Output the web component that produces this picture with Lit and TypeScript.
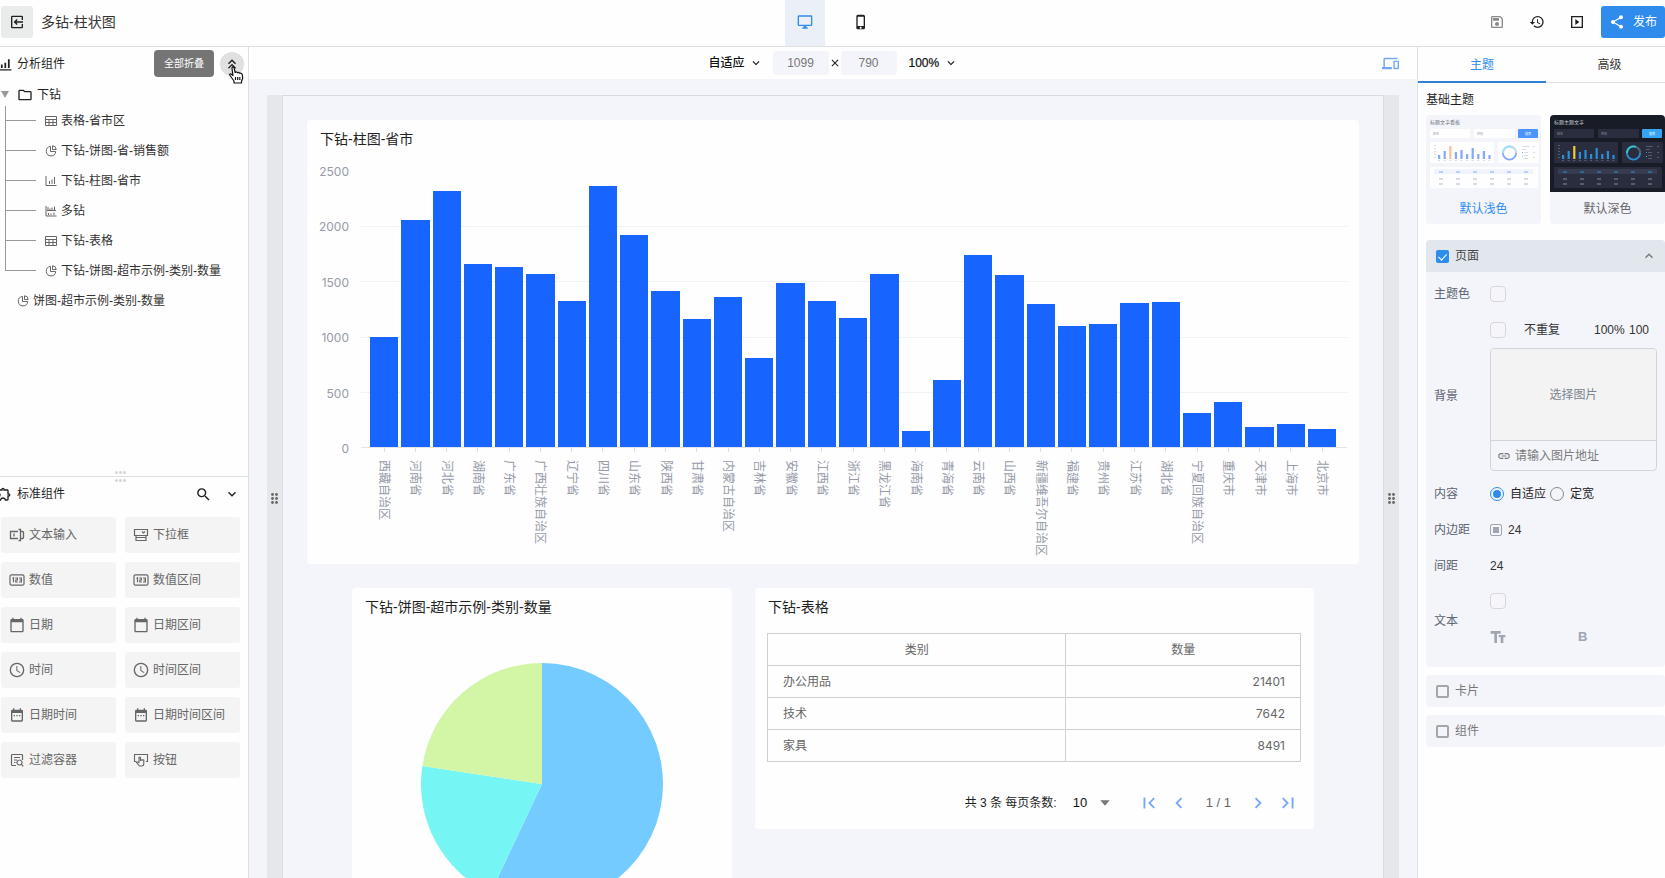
import { LitElement, html, css, svg } from "lit";
import { customElement } from "lit/decorators.js";
import { classMap } from "lit/directives/class-map.js";
import { styleMap } from "lit/directives/style-map.js";

const base = css`
  *, *::before, *::after { box-sizing: border-box; }
  :host {
    font-family: "Liberation Sans", "Noto Sans CJK SC", sans-serif;
    font-size: 12px;
    line-height: 18px;
    color: #1f1f1f;
  }
  button, input, select {
    font: inherit;
    color: inherit;
    margin: 0;
    padding: 0;
    border: 0;
    background: none;
    min-width: 0;
  }
  button { cursor: pointer; display: flex; align-items: center; }
  select { appearance: none; outline: none; }
  svg { display: block; flex: none; }
  h1, h2, h3, ul, p { margin: 0; padding: 0; font-weight: 400; list-style: none; }
`;

const P = {
  exit: "M5 2.500h14a2 2 0 0 1 2 2V9h-2V4.500H5v15h14V15h2v4.500a2 2 0 0 1-2 2H5a2 2 0 0 1-2-2v-15a2 2 0 0 1 2-2zM11.500 7.500L13 9l-2 2h10v2H11l2 2-1.500 1.500L7 12z",
  desktop: "M21 2H3c-1.1 0-2 .9-2 2v12c0 1.1.9 2 2 2h7v2H8v2h8v-2h-2v-2h7c1.1 0 2-.9 2-2V4c0-1.1-.9-2-2-2zm0 14H3V4h18v12z",
  phone: "M15.5 1h-8C6.12 1 5 2.12 5 3.5v17C5 21.88 6.12 23 7.5 23h8c1.38 0 2.5-1.12 2.5-2.5v-17C18 2.12 16.88 1 15.5 1zm-4 21c-.83 0-1.5-.67-1.5-1.5s.67-1.5 1.5-1.5 1.5.67 1.5 1.5-.67 1.5-1.5 1.5zm4.5-4H7V4h9v14z",
  save: "M17 3H5c-1.11 0-2 .9-2 2v14c0 1.1.89 2 2 2h14c1.1 0 2-.9 2-2V7l-4-4zm2 16H5V5h11.17L19 7.83V19zm-7-7c-1.66 0-3 1.34-3 3s1.34 3 3 3 3-1.34 3-3-1.34-3-3-3zM6 6h9v4H6z",
  history: "M13 3a9 9 0 0 0-9 9H1l3.89 3.89.07.14L9 12H6c0-3.87 3.13-7 7-7s7 3.13 7 7-3.13 7-7 7c-1.93 0-3.68-.79-4.94-2.06l-1.42 1.42A8.95 8.95 0 0 0 13 21a9 9 0 0 0 0-18zm-1 5v5l4.28 2.54.72-1.21-3.5-2.08V8H12z",
  play: "M3 3h18v18H3zM5 5v14h14V5zM9.500 7.500l6 4.500-6 4.500z",
  share: "M18 16.08c-.76 0-1.44.3-1.96.77L8.91 12.7c.05-.23.09-.46.09-.7s-.04-.47-.09-.7l7.05-4.11c.54.5 1.25.81 2.04.81 1.66 0 3-1.34 3-3s-1.34-3-3-3-3 1.34-3 3c0 .24.04.47.09.7L8.04 9.81C7.5 9.31 6.79 9 6 9c-1.66 0-3 1.34-3 3s1.34 3 3 3c.79 0 1.5-.31 2.04-.81l7.12 4.16c-.05.21-.08.43-.08.65 0 1.61 1.31 2.92 2.92 2.92s2.92-1.31 2.92-2.92-1.31-2.92-2.92-2.92z",
  devices: "M4 6h18V4H4c-1.1 0-2 .9-2 2v11H0v3h14v-3H4V6zm19 2h-6c-.55 0-1 .45-1 1v10c0 .55.45 1 1 1h6c.55 0 1-.45 1-1V9c0-.55-.45-1-1-1zm-1 10h-4v-8h4v8z",
  folder: "M9.17 6l2 2H20v10H4V6h5.17M10 4H4c-1.1 0-1.99.9-1.99 2L2 18c0 1.1.9 2 2 2h16c1.1 0 2-.9 2-2V8c0-1.1-.9-2-2-2h-8l-2-2z",
  link: "M3.9 12c0-1.71 1.39-3.1 3.1-3.1h4V7H7c-2.76 0-5 2.24-5 5s2.24 5 5 5h4v-1.9H7c-1.71 0-3.1-1.39-3.1-3.1zM8 13h8v-2H8v2zm9-6h-4v1.9h4c1.71 0 3.1 1.39 3.1 3.1s-1.39 3.1-3.1 3.1h-4V17h4c2.76 0 5-2.24 5-5s-2.24-5-5-5z",
  date: "M20 3h-1V1h-2v2H7V1H5v2H4c-1.1 0-2 .9-2 2v16c0 1.1.9 2 2 2h16c1.1 0 2-.9 2-2V5c0-1.1-.9-2-2-2zm0 18H4V8h16v13z",
  datetime: "M19 4h-1V2h-2v2H8V2H6v2H5a2 2 0 0 0-2 2v14a2 2 0 0 0 2 2h14a2 2 0 0 0 2-2V6a2 2 0 0 0-2-2zm0 16H5V9h14v11zM7 12h2v2H7zm4 0h2v2h-2zm4 0h2v2h-2z",
  clock: "M12 1a11 11 0 1 0 0 22 11 11 0 0 0 0-22zm0 20a9 9 0 1 1 0-18 9 9 0 0 1 0 18zM12.500 6H11v7l5.200 3.600.9-1.300-4.600-3.100z",
  extension: "M10.500 4.500c.28 0 .5.22.5.5v2h6v6h2c.28 0 .5.22.5.5s-.22.5-.5.5h-2v6h-2.120c-.68-1.750-2.390-3-4.380-3s-3.700 1.250-4.380 3H4v-2.120c1.750-.68 3-2.390 3-4.380 0-1.990-1.240-3.700-2.990-4.380L4 7h6V5c0-.28.22-.5.5-.5m0-2C9.120 2.500 8 3.620 8 5H4c-1.100 0-1.990.9-1.990 2v3.800h.29c1.490 0 2.700 1.210 2.700 2.700s-1.210 2.700-2.700 2.700H2V20c0 1.100.9 2 2 2h3.800v-.3c0-1.490 1.210-2.700 2.700-2.700s2.700 1.210 2.700 2.700v.3H17c1.100 0 2-.9 2-2v-4c1.380 0 2.500-1.120 2.500-2.500S20.380 11 19 11V7c0-1.100-.9-2-2-2h-4c0-1.380-1.120-2.500-2.500-2.500z",
  search: "M15.500 14h-.79l-.28-.27A6.470 6.470 0 0 0 16 9.500 6.500 6.500 0 1 0 9.500 16c1.610 0 3.090-.59 4.230-1.570l.27.28v.79l5 4.990L20.490 19l-4.990-5zm-6 0C7.010 14 5 11.990 5 9.500S7.010 5 9.500 5 14 7.010 14 9.500 11.990 14 9.500 14z",
  down: "M7.410 8.590L12 13.170l4.590-4.580L18 10l-6 6-6-6z",
  up: "M7.410 15.410L12 10.830l4.590 4.580L18 14l-6-6-6 6z",
  left: "M15.410 7.410L14 6l-6 6 6 6 1.410-1.410L10.830 12z",
  right: "M10 6L8.590 7.410 13.170 12l-4.580 4.590L10 18l6-6z",
  first: "M18.410 16.590L13.820 12l4.590-4.590L17 6l-6 6 6 6zM6 6h2v12H6z",
  last: "M5.590 7.410L10.180 12l-4.590 4.590L7 18l6-6-6-6zM16 6h2v12h-2z",
  collapse: "M6 17.590L7.410 19 12 14.420 16.590 19 18 17.590l-6-6zM6 11l1.410 1.410L12 7.830l4.590 4.580L18 11l-6-6z",
  drop: "M5 8h14l-7 8z",
  close: "M19 6.410L17.590 5 12 10.590 6.410 5 5 6.410 10.590 12 5 17.590 6.410 19 12 13.410 17.590 19 19 17.590 13.410 12z",
  bars: "M1 21h22v2H1zM5 13h3v6H5zm6-3h3v9h-3zm6-6h3v15h-3z",
  size: "M1 3h15v4h-5.500v14h-4V7H1zm12 6h10v3.500h-3V21h-4v-8.500h-3z",
};

const icon = (d: string, size = 16) =>
  html`<svg width=${size} height=${size} viewBox="0 0 24 24" fill="currentColor" aria-hidden="true"><path fill-rule="evenodd" d=${d}></path></svg>`;

const lineIcon = (d: string, size = 12, box = 12, weight = 1) =>
  html`<svg width=${size} height=${size} viewBox="0 0 ${box} ${box}" fill="none" stroke="currentColor" stroke-width=${weight} aria-hidden="true"><path d=${d}></path></svg>`;

const L = {
  table: "M.5 1.5h11v9H.5zM.5 4.500h11M.5 7.500h11M4 4.500v6M8 4.500v6",
  pie: "M5.500 1.500a4.700 4.700 0 1 0 5.200 5M5.500 1.500V6.500h5.200M7.500.8a3.800 3.800 0 0 1 3.700 3.700H7.500z",
  bar: "M1 1v9.500h10.500M4.500 9V6M7 9V4.500M9.500 9V2",
  multi: "M1 1v10h10.500M3 5V2M5 5V3.500M7 5V2.500M9.500 5V1.500M2 5.500h9M3.500 10V8M6 10V8.500M9 10V7.500",
};

const C: Record<string, unknown> = {
  input: lineIcon("M9 4.500H1.500v7H9M5 6.500v3M9.500 2.500h2v11h-2M12 4.500h1.500q1 0 1 1v5q0 1-1 1H12", 16, 16, 1.3),
  select: lineIcon("M1.500 2.500h13v6h-13zM3 8.500V13.500h10V8.500M3 10.500h10M9 4.500l1.500 1.500 1.500-1.500", 16, 16, 1.2),
  number: html`<svg width="16" height="16" viewBox="0 0 16 16" fill="none" stroke="currentColor" stroke-width="1.200" aria-hidden="true"><rect x="1" y="2.800" width="14" height="10.400" rx="1.500"></rect><path d="M3.500 6.500l1-.7v4.500M6.200 6h2.200v2H6.800v2h2M10 6h2.400v4H10M10.500 8h1.700"></path></svg>`,
  filter: lineIcon("M13.500 8V3.500q0-1-1-1h-9q-1 0-1 1v9q0 1 1 1H7M5 5.500h6M5 8h3M5 10.500h1.500M10.500 8a2.500 2.500 0 1 0 .01 0M12.300 12.300l2 2", 16, 16, 1.2),
  button: lineIcon("M3.500 9.500H1.500v-7h13v7H13M6 11V5.500q.8-.8 1.500 0V9M7.500 8q.8-.6 1.500 0v1M9 8q1-.6 1.800 0v3.500q0 2.500-2 2.500H6.500L3.500 10.500q1-1.200 2.500.5", 16, 16, 1.1),
};
for (const k of ["date", "datetime", "clock"] as const) C[k] = icon(P[k], 16);

/* ---------- top bar ---------- */
@customElement("top-bar")
class TopBar extends LitElement {
  static styles = [base, css`
    :host { display: grid; grid-template-columns: 1fr auto 1fr; height: 47px; border-bottom: 1px solid #dedfe1; background: #fefefe; }
    .start, .end { display: flex; align-items: center; height: 44px; }
    .start { padding-left: 1px; gap: 8px; }
    .exit { width: 32px; height: 32px; background: #e9eceb; border-radius: 3px; justify-content: center; }
    .title { font-size: 14px; line-height: 20px; color: #333; }
    .modes { display: flex; gap: 16px; }
    .mode { width: 40px; justify-content: center; padding-bottom: 2px; }
    .mode.on { background: #ebf0f8; color: #2f8cec; }
    .end { justify-content: flex-end; gap: 8px; }
    .tool { width: 32px; height: 32px; justify-content: center; }
    .tool.off { color: #8a8a8a; }
    .publish { width: 64px; height: 32px; background: #2f8cec; color: #fff; border-radius: 3px; justify-content: center; gap: 8px; }
  `];
  render() {
    return html`
      <div class="start">
        <button class="exit" aria-label="退出">${icon(P.exit, 16)}</button>
        <h1 class="title">多钻-柱状图</h1>
      </div>
      <div class="modes">
        <button class="mode on" aria-label="桌面">${icon(P.desktop)}</button>
        <button class="mode" aria-label="手机">${icon(P.phone)}</button>
      </div>
      <div class="end">
        <button class="tool off" aria-label="保存">${icon(P.save)}</button>
        <button class="tool" aria-label="历史">${icon(P.history)}</button>
        <button class="tool" aria-label="预览">${icon(P.play)}</button>
        <button class="publish">${icon(P.share)}<span>发布</span></button>
      </div>`;
  }
}

/* ---------- left panel ---------- */
const TREE: [keyof typeof L, string][] = [
  ["table", "表格-省市区"],
  ["pie", "下钻-饼图-省-销售额"],
  ["bar", "下钻-柱图-省市"],
  ["multi", "多钻"],
  ["table", "下钻-表格"],
  ["pie", "下钻-饼图-超市示例-类别-数量"],
];
const PARTS: [string, string][] = [
  ["input", "文本输入"], ["select", "下拉框"],
  ["number", "数值"], ["number", "数值区间"],
  ["date", "日期"], ["date", "日期区间"],
  ["clock", "时间"], ["clock", "时间区间"],
  ["datetime", "日期时间"], ["datetime", "日期时间区间"],
  ["filter", "过滤容器"], ["button", "按钮"],
];

@customElement("left-panel")
class LeftPanel extends LitElement {
  static styles = [base, css`
    :host { display: flex; flex-direction: column; width: 249px; border-right: 1px solid #dedfe1; background: #fefefe; min-height: 0; }
    .top { flex: 430 1 0; border-bottom: 1px solid #dedfe1; position: relative; }
    .bottom { flex: 401 1 0; }
    .head { display: flex; align-items: center; height: 33px; padding-top: 1px; }
    .head-icon { width: 12px; margin-right: 5px; display: flex; justify-content: flex-end; overflow: hidden; }
    .head h2 { font-size: 12px; line-height: 18px; flex: 1; }
    .collapse-wrap { position: relative; padding-right: 4px; }
    .collapse { width: 24px; height: 24px; border-radius: 50%; background: #e0e0e0; justify-content: center; }
    .tip { position: absolute; right: 34px; top: -2px; width: 60px; height: 27px; border-radius: 4px; background: #757575; color: #fff; font-size: 10px; line-height: 27px; text-align: center; }
    .hand { position: absolute; left: 9px; top: 14px; }
    .root { display: flex; align-items: center; height: 23px; padding-left: 1px; gap: 8px; color: #333; }
    .root .caret { color: #999; }
    .folder { display: flex; gap: 4px; align-items: center; color: #222; }
    .items { padding: 0 0 0 5px; }
    .node { display: flex; align-items: center; height: 30px; color: #333; }
    .wire {
      width: 31px; height: 30px; margin-right: 9px;
      background: linear-gradient(#999, #999) 0 0 / 1px 100% no-repeat, linear-gradient(#999, #999) 0 14px / 100% 1px no-repeat;
    }
    .node:last-child .wire { background-size: 1px 14px, 100% 1px; }
    .node svg { margin-right: 4px; color: #666; }
    .lone { padding-left: 17px; }
    .tree { padding-top: 3px; }
    .dots { position: absolute; left: 115px; bottom: -6px; display: grid; grid-template-columns: repeat(3, 3px); gap: 5px 1px; }
    .dots i { width: 3px; height: 3px; border-radius: 50%; background: #d6d6d6; }
    .tools { display: flex; gap: 12px; padding-right: 8px; }
    .grid { display: grid; grid-template-columns: 1fr 1fr; gap: 9px; padding: 7px 8px 0 1px; }
    .part { height: 36px; background: #f4f4f4; border-radius: 3px; padding-left: 8px; gap: 4px; color: #666; }
  `];
  render() {
    return html`
      <section class="top">
        <div class="head">
          <span class="head-icon">${icon(P.bars, 14)}</span>
          <h2>分析组件</h2>
          <div class="collapse-wrap">
            <button class="collapse" aria-label="全部折叠">${icon(P.collapse, 16)}</button>
            <div class="tip" role="tooltip">全部折叠</div>
            <svg class="hand" width="15" height="18" viewBox="0 0 15 18" fill="#fff" stroke="#111" stroke-width="1.200" stroke-linejoin="round">
              <path d="M5 17v-2L1 9.500q-.8-2 1-1.500L4 9.500 3 2.500Q3-.2 5 1.500L6.200 6.500q1.500-1.200 2.300.3 1.400-.9 2.200.5 1.700-.6 2.500 1l.5 4-1.200 3v1.700z"></path>
              <path d="M6.500 11v3M8.700 11v3M10.800 11v3" fill="none"></path>
            </svg>
          </div>
        </div>
        <div class="tree">
          <div class="root">
            <svg class="caret" width="8" height="8" viewBox="0 0 8 8" fill="currentColor"><path d="M0 0h8L4 7z"></path></svg>
            <span class="folder">${icon(P.folder, 16)}<span>下钻</span></span>
          </div>
          <ul class="items">
            ${TREE.map(([k, t]) => html`<li class="node"><span class="wire"></span>${lineIcon(L[k])}<span>${t}</span></li>`)}
          </ul>
          <div class="node lone">${lineIcon(L.pie)}<span>饼图-超市示例-类别-数量</span></div>
        </div>
        <span class="dots">${[1, 2, 3, 4, 5, 6].map(() => html`<i></i>`)}</span>
      </section>
      <section class="bottom">
        <div class="head">
          <span class="head-icon">${icon(P.extension, 16)}</span>
          <h2>标准组件</h2>
          <div class="tools">
            <button aria-label="搜索">${icon(P.search, 17)}</button>
            <button aria-label="收起">${icon(P.down, 16)}</button>
          </div>
        </div>
        <div class="grid">
          ${PARTS.map(([k, t]) => html`<button class="part">${C[k]}<span>${t}</span></button>`)}
        </div>
      </section>`;
  }
}

/* ---------- charts ---------- */
const BARS: [string, number][] = [
  ["西藏自治区", 998], ["河南省", 2060], ["河北省", 2320], ["湖南省", 1661], ["广东省", 1634],
  ["广西壮族自治区", 1568], ["辽宁省", 1327], ["四川省", 2365], ["山东省", 1920], ["陕西省", 1414],
  ["甘肃省", 1161], ["内蒙古自治区", 1360], ["吉林省", 808], ["安徽省", 1490], ["江西省", 1322],
  ["浙江省", 1173], ["黑龙江省", 1570], ["海南省", 144], ["青海省", 610], ["云南省", 1742],
  ["山西省", 1556], ["新疆维吾尔自治区", 1298], ["福建省", 1098], ["贵州省", 1114], ["江苏省", 1304],
  ["湖北省", 1313], ["宁夏回族自治区", 307], ["重庆市", 411], ["天津市", 180], ["上海市", 206], ["北京市", 162],
];

@customElement("bar-chart")
class BarChart extends LitElement {
  static styles = [base, css`
    :host { display: grid; grid-template-columns: 42px 1fr; column-gap: 12px; padding-right: 12px; color: #969ba8; }
    .axis { height: 296px; padding-top: 1px; display: flex; flex-direction: column; justify-content: space-between; text-align: right; font-family: "Inter", sans-serif; font-size: 12px; line-height: 18px; }
    .plot {
      height: 277px; margin-top: 9px; display: flex; align-items: flex-end; gap: 3px; padding: 0 11px 0 9px;
      border-bottom: 1px solid #e2e4ea;
      background: linear-gradient(#fefefe 1px, transparent 1px), repeating-linear-gradient(#f1f2f4 0 1px, transparent 1px 20%);
    }
    .bar { flex: 1; background: #1764ff; }
    .names { display: flex; gap: 3px; padding: 0 11px 0 9px; height: 100px; }
    .name { flex: 1; display: flex; flex-direction: column; align-items: center; min-width: 0; }
    .name::before { content: ""; width: 1px; height: 4px; margin-bottom: 8px; background: #dcdfe6; flex: none; }
    .name span { writing-mode: vertical-rl; text-orientation: sideways; white-space: nowrap; line-height: 18px; }
  `];
  render() {
    return html`
      <div class="axis">${[2500, 2000, 1500, 1000, 500, 0].map((v) => html`<span>${v}</span>`)}</div>
      <div>
        <div class="plot">${BARS.map(([, v]) => html`<div class="bar" style=${styleMap({ height: `${v / 25}%` })}></div>`)}</div>
        <div class="names">${BARS.map(([n]) => html`<div class="name"><span>${n}</span></div>`)}</div>
      </div>`;
  }
}

const SLICES: [number, string][] = [[21401, "#73cbff"], [7642, "#75f5f3"], [8491, "#d2f5a6"]];

@customElement("pie-chart")
class PieChart extends LitElement {
  static styles = [base, css`
    :host { display: flex; justify-content: center; }
  `];
  render() {
    const total = SLICES.reduce((a, [v]) => a + v, 0);
    const r = 121;
    let acc = 0;
    const pt = (f: number) => `${r + r * Math.sin(f * 2 * Math.PI)} ${r - r * Math.cos(f * 2 * Math.PI)}`;
    return html`<svg width="242" height="242" viewBox="0 0 242 242" role="img" aria-label="类别数量">
      ${SLICES.map(([v, c]) => {
        const a = acc / total;
        acc += v;
        const b = acc / total;
        return svg`<path fill=${c} d=${`M${r} ${r}L${pt(a)}A${r} ${r} 0 ${b - a > 0.5 ? 1 : 0} 1 ${pt(b)}Z`}></path>`;
      })}
    </svg>`;
  }
}

/* ---------- centre ---------- */
@customElement("work-area")
class WorkArea extends LitElement {
  static styles = [base, css`
    :host { display: flex; flex-direction: column; min-width: 0; min-height: 0; background: #f4f5fa; overflow: hidden; }
    .bar { height: 32px; flex: none; display: grid; grid-template-columns: 1fr auto 1fr; align-items: center; background: #fefefe; }
    .controls { display: flex; align-items: center; grid-column: 2; }
    .pick { display: flex; align-items: center; font-weight: 500; color: #111; gap: 3px; }
    .fit { width: 37px; font-weight: 500; }
    .zoom { width: 32px; font-weight: 500; -webkit-text-stroke: 0.2px; }
    .dim { width: 56px; height: 24px; border-radius: 4px; background: #f4f5fa; text-align: center; color: #777; }
    .first { margin-left: 10px; }
    .second { margin-right: 12px; }
    .devices { justify-self: end; margin-right: 18px; color: #74a6fa; }
    .stage { flex: 1; min-height: 0; padding: 16px 18px 0; display: flex; }
    .grip { width: 16px; background: #e6e7eb; display: flex; align-items: center; justify-content: center; color: #666; padding-top: 24px; }
    .grip.l { border-right: 1px solid #dcdde1; }
    .grip.r { border-left: 1px solid #dcdde1; }
    .page { flex: 1; min-width: 0; border-top: 1px solid #d8dadf; padding: 24px 24px 0; overflow: hidden; }
    .card { background: #fefefe; border-radius: 4px; padding-top: 9px; }
    .card h3 { font-size: 14px; line-height: 20px; color: #222; padding: 0 13px; }
    .wide { height: 444px; margin-bottom: 24px; }
    .wide bar-chart { margin-top: 13px; }
    .row { display: grid; grid-template-columns: 380fr 559fr; gap: 23px; padding: 0 45px; align-items: start; }
    .pie { height: 392px; }
    .pie pie-chart { margin-top: 46px; }
    .tablecard { height: 241px; }
    table { border-collapse: collapse; width: calc(100% - 25px); margin: 16px 13px 0 12px; color: #666; }
    th, td { border: 1px solid #d0d0d0; height: 32px; padding: 0 15px; font-weight: 400; text-align: left; }
    th { text-align: center; }
    th:first-child { width: 56%; }
    td.num { text-align: right; font-family: "Inter", sans-serif; }
    .pager { display: flex; align-items: center; justify-content: flex-end; margin-top: 29px; padding-right: 14px; height: 24px; }
    .per { display: flex; align-items: center; gap: 16px; }
    .per .count { width: 16px; font-size: 13px; }
    .per .pick { gap: 8px; }
    .per svg { color: #777; }
    .nav { color: #74a6fa; width: 24px; height: 24px; justify-content: center; }
    .now { font-size: 13px; color: #666; padding: 0 15px; }
    .n1 { margin-left: 24px; }
    .n2 { margin-left: 6px; }
  `];
  private grip(side: string) {
    return html`<div class="grip ${side}"><svg width="7" height="11" viewBox="0 0 7 11" fill="currentColor">
      ${[1.5, 5.5, 9.5].map((y) => svg`<circle cx="1.500" cy=${y} r="1.400"></circle><circle cx="5.500" cy=${y} r="1.400"></circle>`)}
    </svg></div>`;
  }
  render() {
    return html`
      <div class="bar">
        <div class="controls">
          <label class="pick"><select class="fit" aria-label="适配"><option>自适应</option></select>${icon(P.down, 14)}</label>
          <input class="dim first" aria-label="宽" .value=${"1099"} />
          ${icon(P.close, 12)}
          <input class="dim second" aria-label="高" .value=${"790"} />
          <label class="pick"><select class="zoom" aria-label="缩放"><option>100%</option></select>${icon(P.down, 14)}</label>
        </div>
        <button class="devices" aria-label="设备">${icon(P.devices, 17)}</button>
      </div>
      <div class="stage">
        ${this.grip("l")}
        <main class="page">
          <section class="card wide"><h3>下钻-柱图-省市</h3><bar-chart></bar-chart></section>
          <div class="row">
            <section class="card pie"><h3>下钻-饼图-超市示例-类别-数量</h3><pie-chart></pie-chart></section>
            <section class="card tablecard">
              <h3>下钻-表格</h3>
              <table>
                <thead><tr><th>类别</th><th>数量</th></tr></thead>
                <tbody>
                  ${[["办公用品", 21401], ["技术", 7642], ["家具", 8491]].map(([n, v]) => html`<tr><td>${n}</td><td class="num">${v}</td></tr>`)}
                </tbody>
              </table>
              <div class="pager">
                <label class="per"><span>共 3 条 每页条数:</span>
                  <span class="pick"><select class="count"><option>10</option></select>${icon(P.drop, 16)}</span>
                </label>
                <button class="nav n1" aria-label="第一页">${icon(P.first, 22)}</button>
                <button class="nav n2" aria-label="上一页">${icon(P.left, 22)}</button>
                <span class="now">1 / 1</span>
                <button class="nav" aria-label="下一页">${icon(P.right, 22)}</button>
                <button class="nav n2" aria-label="最后一页">${icon(P.last, 22)}</button>
              </div>
            </section>
          </div>
        </main>
        ${this.grip("r")}
      </div>`;
  }
}

/* ---------- theme preview ---------- */
interface Skin { bg: string; card: string; text: string; head: string; btn: string; bar: string; hot: string; ring: string; ring2: string; cell: string; label: string; }
const LIGHT: Skin = { bg: "#f4f5fa", card: "#fefefe", text: "#6f7480", head: "#f0f4fc", btn: "#4d94ff", bar: "#83aaf5", hot: "#ffbf9b", ring: "#83aaf5", ring2: "#a2e6f2", cell: "#d8dce6", label: "#9a9ea8" };
const DARK: Skin = { bg: "#171c26", card: "#2a2d3e", text: "#c9ccd4", head: "#373c50", btn: "#35a4f5", bar: "#2b8fd8", hot: "#f2cc30", ring: "#2b8fd8", ring2: "#35c6c8", cell: "#575c6c", label: "#8a8fa0" };

const preview = (s: Skin, title: string) => {
  const hs = [4, 8, 13, 7, 9, 5, 11, 5, 8, 4];
  return html`<svg class="thumb" width="100%" height="77" viewBox="0 0 115 77" preserveAspectRatio="none" aria-hidden="true">
    <rect width="115" height="77" fill=${s.bg}></rect>
    <text x="4" y="9" font-size="5" fill=${s.text}>${title}</text>
    <rect x="4" y="14" width="40" height="9" rx="1" fill=${s.card}></rect>
    <rect x="48" y="14" width="41" height="9" rx="1" fill=${s.card}></rect>
    <rect x="92" y="14" width="20" height="9" rx="1" fill=${s.btn}></rect>
    <text x="7" y="20" font-size="3" fill=${s.label}>姓名</text>
    <text x="51" y="20" font-size="3" fill=${s.label}>性别</text>
    <text x="99" y="20" font-size="3" fill="#fff">搜索</text>
    <rect x="4" y="27" width="64" height="21" rx="1" fill=${s.card}></rect>
    <rect x="72" y="27" width="41" height="21" rx="1" fill=${s.card}></rect>
    ${hs.map((h, i) => svg`<rect x=${12 + i * 5.6} y=${44 - h} width="2.200" height=${h} fill=${i === 2 ? s.hot : s.bar}></rect><rect x=${12 + i * 5.6} y="45" width="2" height="1" fill=${s.cell}></rect>`)}
    ${[30, 33, 36, 39, 42].map((y) => svg`<rect x="8" y=${y} width="2" height="1" fill=${s.cell}></rect>`)}
    <circle cx="83.500" cy="38" r="6.600" fill="none" stroke=${s.ring} stroke-width="1.800"></circle>
    <path d="M76.900 38A6.600 6.600 0 0 1 86 31.900" fill="none" stroke=${s.ring2} stroke-width="1.800"></path>
    <path d="M86 31.900A6.600 6.600 0 0 1 90.100 38" fill="none" stroke=${s.cell} stroke-width="1.800"></path>
    ${[31, 34, 37, 40, 43].map((y, i) => svg`<rect x=${i < 2 ? 96 : 98} y=${y} width=${i === 0 ? 7 : 4} height="1" fill=${s.cell}></rect>`)}
    ${[31, 37, 42].map((y) => svg`<rect x="107" y=${y} width="2" height="1" fill=${s.cell}></rect>`)}
    <rect x="96" y="37" width="1" height="1" fill=${s.ring}></rect><rect x="96" y="41" width="1" height="1" fill=${s.ring2}></rect>
    <rect x="4" y="52" width="108" height="21" rx="1" fill=${s.card}></rect>
    <rect x="8" y="54" width="99" height="5" fill=${s.head}></rect>
    ${[56, 63, 68].map((y, r) => [13, 30, 47, 64, 81, 98].map((x) => svg`<rect x=${x} y=${y} width="4" height="2" fill=${r ? s.cell : s.bar} opacity=${r ? 1 : 0.5}></rect>`))}
  </svg>`;
};

/* ---------- right panel ---------- */
@customElement("right-panel")
class RightPanel extends LitElement {
  static styles = [base, css`
    :host { display: flex; flex-direction: column; width: 248px; border-left: 1px solid #dedfe1; background: #fefefe; min-height: 0; overflow: hidden; }
    .tabs { display: grid; grid-template-columns: 128px 1fr; height: 36px; }
    .tab { justify-content: center; border-bottom: 1px solid #dedfe1; color: #333; padding-top: 1px; }
    .tab.on { color: #2f8cec; border-bottom: 2px solid #2f80d8; }
    .tab.next { padding-left: 8px; }
    .body { padding-left: 8px; }
    .body h2 { font-size: 12px; line-height: 18px; padding: 8px 0 6px; }
    .themes { display: grid; grid-template-columns: 1fr 1fr; gap: 9px; }
    .theme { display: block; background: #f4f5fa; border-radius: 4px; height: 109px; overflow: hidden; color: #666; }
    .theme.on { color: #2f8cec; }
    .thumb { display: block; }
    .theme .cap { display: block; line-height: 18px; padding: 8px 0 6px; }
    .panel { background: #f4f5fa; border-radius: 4px; }
    .panel.open { margin-top: 16px; overflow: hidden; padding-bottom: 10px; }
    .panel.shut { margin-top: 8px; }
    .bar { display: flex; align-items: center; height: 32px; padding: 0 10px; color: #777; }
    .open .bar { background: #e2e6ed; color: #444; }
    .bar label { flex: 1; display: flex; align-items: center; gap: 6px; }
    .tick { appearance: none; width: 13px; height: 13px; border: 2px solid #a6a6a9; border-radius: 2px; }
    .tick:checked { border: 0; background: #2f8cec; position: relative; }
    .tick:checked::after { content: ""; position: absolute; left: 4px; top: 2px; width: 5px; height: 8px; border: solid #fff; border-width: 0 1px 1px 0; rotate: 42deg; }
    .fold { color: #777; margin-right: -2px; }
    .form { display: grid; grid-template-columns: 56px minmax(0, 1fr); padding: 0 8px; align-items: center; }
    .lab { color: #5d6472; }
    .cell { display: flex; align-items: center; height: 36px; }
    .sw { width: 16px; height: 16px; border: 1px solid #d5d7dc; border-radius: 4px; background: #f6f6fa; }
    .r1 { height: 44px; }
    .bgbox { display: flex; flex-direction: column; gap: 4px; padding-bottom: 5px; }
    .bgrow { height: 28px; }
    .repeat { width: 38px; margin: 0 32px 0 18px; color: #333; }
    .pct { width: 32px; margin-right: 3px; color: #333; }
    .pct2 { width: 21px; color: #333; }
    .drop { border: 1px solid #d2d4d9; border-radius: 4px; height: 123px; display: flex; flex-direction: column; overflow: hidden; }
    .choose { flex: 1; background: #f3f3f3; border-bottom: 1px solid #d2d4d9; justify-content: center; color: #7d8390; }
    .url { height: 29px; display: flex; align-items: center; padding-left: 6px; gap: 4px; color: #777; }
    .url input { flex: 1; }
    .url input::placeholder { color: #7b7b7b; opacity: 1; }
    .content label { display: flex; align-items: center; color: #222; margin-right: 4px; gap: 6px; }
    .radio { appearance: none; width: 14px; height: 14px; border: 1px solid #888; border-radius: 50%; display: grid; place-items: center; }
    .radio:checked { border-color: #2f8cec; }
    .radio:checked::after { content: ""; width: 8px; height: 8px; border-radius: 50%; background: #2f8cec; }
    .pad { width: 12px; height: 12px; border: 1px solid #a0a5b2; border-radius: 2px; margin-right: 6px; }
    .pad::after { content: ""; width: 6px; height: 6px; margin: auto; background: #a0a5b2; }
    .num { width: 32px; color: #333; }
    .textbox { padding: 9px 0 0; height: 73px; display: flex; flex-direction: column; gap: 20px; }
    .styles { display: flex; color: #a0a5b2; gap: 72px; align-items: center; height: 16px; }
    .bold { font-weight: 700; font-size: 13px; line-height: 16px; }
  `];
  render() {
    return html`
      <div class="tabs" role="tablist">
        <button class="tab on" role="tab" aria-selected="true">主题</button>
        <button class="tab next" role="tab" aria-selected="false">高级</button>
      </div>
      <div class="body">
        <h2>基础主题</h2>
        <div class="themes">
          <button class=${classMap({ theme: true, on: true })}>${preview(LIGHT, "标题文字看板")}<span class="cap">默认浅色</span></button>
          <button class="theme">${preview(DARK, "标题主题文字")}<span class="cap">默认深色</span></button>
        </div>
        <section class="panel open">
          <div class="bar"><label><input class="tick" type="checkbox" checked />页面</label>
            <button class="fold" aria-label="收起">${icon(P.up, 16)}</button></div>
          <div class="form">
            <span class="lab">主题色</span>
            <div class="cell r1"><button class="sw" aria-label="主题色"></button></div>
            <span class="lab">背景</span>
            <div class="bgbox">
              <div class="cell bgrow">
                <button class="sw" aria-label="背景色"></button>
                <select class="repeat" aria-label="重复"><option>不重复</option></select>
                <input class="pct" aria-label="宽度" .value=${"100%"} /><input class="pct2" aria-label="高度" .value=${"100"} />
              </div>
              <div class="drop">
                <button class="choose">选择图片</button>
                <label class="url">${icon(P.link, 14)}<input aria-label="图片地址" placeholder="请输入图片地址" /></label>
              </div>
            </div>
            <span class="lab">内容</span>
            <div class="cell content">
              <label><input class="radio" type="radio" name="w" checked />自适应</label>
              <label><input class="radio" type="radio" name="w" />定宽</label>
            </div>
            <label class="lab" for="padding">内边距</label>
            <div class="cell"><button class="pad" aria-label="统一边距"></button><input id="padding" class="num" .value=${"24"} /></div>
            <label class="lab" for="gap">间距</label>
            <div class="cell"><input id="gap" class="num" .value=${"24"} /></div>
            <span class="lab">文本</span>
            <div class="textbox">
              <button class="sw" aria-label="文字颜色"></button>
              <div class="styles"><button aria-label="字号">${icon(P.size, 16)}</button><button class="bold">B</button></div>
            </div>
          </div>
        </section>
        ${["卡片", "组件"].map((t) => html`<section class="panel shut"><div class="bar"><label><input class="tick" type="checkbox" />${t}</label></div></section>`)}
      </div>`;
  }
}

@customElement("app-root")
class AppRoot extends LitElement {
  static styles = [base, css`
    :host { display: flex; flex-direction: column; height: 100vh; overflow: hidden; background: #fefefe; }
    .main { flex: 1; min-height: 0; display: grid; grid-template-columns: auto 1fr auto; grid-template-rows: minmax(0, 1fr); }
  `];
  render() {
    return html`<top-bar></top-bar><div class="main"><left-panel></left-panel><work-area></work-area><right-panel></right-panel></div>`;
  }
}
